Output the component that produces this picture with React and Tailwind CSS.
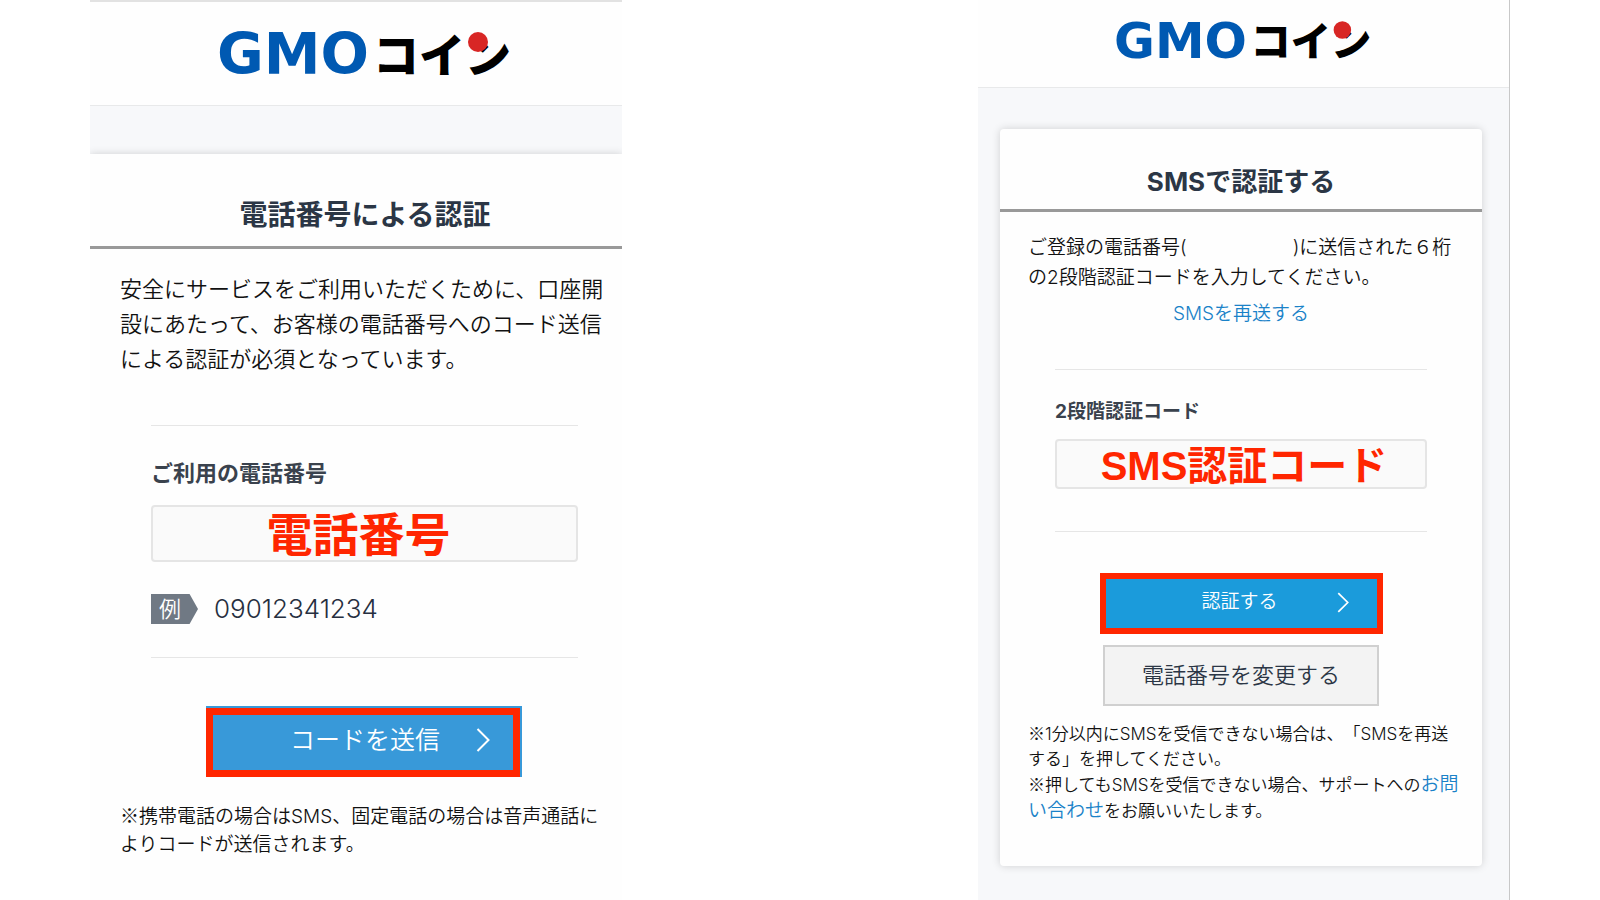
function Logo({ className }) {
  return (
    <svg viewBox="-2 0 296 72" className={className} role="img" aria-label="GMOコイン">
      <text x="-2" y="56" fontSize="57" fontWeight="700" fill="#0059b2" fontFamily="'DejaVu Sans', sans-serif">
        GMO
      </text>
      <text x="154" y="54" fontSize="46" fontWeight="900" fill="#000" fontFamily="'Noto Sans CJK JP', sans-serif">
        コイン
      </text>
      <circle cx="259" cy="24" r="10" fill="#d82625" />
    </svg>
  );
}

function Chevron({ className }) {
  return (
    <svg viewBox="0 0 14 24" className={className} fill="none" stroke="currentColor" strokeWidth="2" aria-hidden="true">
      <path d="M1.5 1 L12.5 12 L1.5 23" />
    </svg>
  );
}

// Inter has its own small ※, so take the full-width one
function NoteMark() {
  return <span className="font-['Noto_Sans_CJK_JP',sans-serif] leading-none">※</span>;
}

function PhonePanel() {
  return (
    <section className="w-full max-w-[532px] border-t-2 border-[#e2e2e2] bg-[#fefefe]">
      <header className="flex h-[104px] items-start justify-center border-b border-[#e8e9ea] pt-[16px] pl-[18px]">
        <Logo className="w-[296px]" />
      </header>
      <div className="h-[48px] bg-[#f7f8fa]" />
      <div className="bg-[#fefefe] shadow-[0_0_8px_rgba(0,0,0,0.16)] [clip-path:inset(-12px_0_0_0)]">
        <h1 className="border-b-3 border-[#999] pt-[41px] pb-[11px] pl-[18px] text-center text-[28px] leading-[40px] font-bold text-[#2b3645]">
          電話番号による認証
        </h1>
        <p className="pt-[23px] pl-[30px] text-[22px] leading-[35px] whitespace-nowrap">
          安全にサービスをご利用いただくために、口座開
          <br />
          設にあたって、お客様の電話番号へのコード送信
          <br />
          による認証が必須となっています。
        </p>
        <form className="mt-[48px] mr-[44px] ml-[61px] border-y border-[#e6e6e6] pt-[31px] pb-[33px]">
          <label htmlFor="phone" className="block text-[22px] leading-[32px] font-bold text-[#3a424d]">
            ご利用の電話番号
          </label>
          <input
            id="phone"
            type="text"
            defaultValue="電話番号"
            className="mt-[16px] block h-[57px] w-full rounded-sm border-2 border-[#e5e5e5] bg-[#fafafa] pr-[12px] pb-[6px] text-center text-[46px] leading-[50px] font-bold text-[#ff2600]"
          />
          <div className="mt-[32px] flex h-[30px] items-center gap-[16px]">
            <span className="h-[30px] w-[47px] bg-[#707984] pl-[8px] text-[22px] leading-[30px] text-white [clip-path:polygon(0_0,82%_0,100%_50%,82%_100%,0_100%)]">
              例
            </span>
            <span className="text-[26px] leading-[30px] text-[#262f40]">09012341234</span>
          </div>
        </form>
        <div className="mt-[48px] ml-[116px] w-[316px] bg-[#3899d9] pt-[2px] pr-[2px]">
          <button
            type="button"
            className="flex h-[69px] w-full items-center border-7 border-[#ff2600] bg-[#3899d9] pr-[23px] pb-[6px] pl-[77px] text-[25px] leading-[36px] text-white"
          >
            コードを送信
            <Chevron className="ml-auto h-[24px] w-[14px]" />
          </button>
        </div>
        <p className="pt-[26px] pl-[30px] text-[19px] leading-[28px] whitespace-nowrap">
          <NoteMark />
          携帯電話の場合はSMS、固定電話の場合は音声通話に
          <br />
          よりコードが送信されます。
        </p>
      </div>
    </section>
  );
}

function SmsPanel() {
  return (
    <section className="w-full max-w-[532px] border-r border-[#c8c8c8] bg-[#f7f8fa]">
      <header className="flex h-[88px] items-start justify-center border-b border-[#e8e9ea] bg-[#fefefe] pt-[9px]">
        <Logo className="w-[259px]" />
      </header>
      <div className="mt-[41px] mr-[27px] ml-[22px] rounded-sm bg-[#fefefe] pb-[42px] shadow-[0_0_8px_rgba(0,0,0,0.16)]">
        <h1 className="border-b-3 border-[#999] pt-[35px] pb-[9px] text-center text-[26px] leading-[36px] font-bold text-[#2b3645]">
          SMSで認証する
        </h1>
        <p className="pt-[21px] pl-[28px] text-[19px] leading-[30px] whitespace-nowrap">
          ご登録の電話番号(
          <span className="inline-block w-[106px]" />
          )に送信された６桁
          <br />
          の2段階認証コードを入力してください。
        </p>
        <p className="pt-[6px] text-center text-[19px] leading-[30px]">
          <a href="#resend" className="text-[#1a82c8]">SMSを再送する</a>
        </p>
        <form className="mx-[55px] mt-[40px] border-y border-[#e6e6e6] pt-[27px] pb-[42px]">
          <label htmlFor="code" className="block text-[19px] leading-[30px] font-bold text-[#3a424d]">
            2段階認証コード
          </label>
          <input
            id="code"
            type="text"
            defaultValue="SMS認証コード"
            className="mt-[12px] block h-[50px] w-full rounded-sm border-2 border-[#e5e5e5] bg-[#fafafa] pb-[2px] pl-[6px] text-center font-['Liberation_Sans','Noto_Sans_CJK_JP',sans-serif] text-[40px] leading-[44px] font-bold text-[#ff2600]"
          />
        </form>
        <div className="mt-[41px] flex flex-col items-center">
          <button
            type="button"
            className="flex h-[61px] w-[283px] items-center border-6 border-[#ff2600] bg-[#1b9bdb] pr-[28px] pb-[3px] pl-[96px] text-[19px] leading-[30px] text-white"
          >
            認証する
            <Chevron className="ml-auto h-[21px] w-[12px]" />
          </button>
          <button
            type="button"
            className="mt-[11px] h-[61px] w-[276px] border-2 border-[#d0d0d0] bg-[#f3f3f3] pb-[2px] text-[22px] leading-[36px] text-[#2b3645]"
          >
            電話番号を変更する
          </button>
        </div>
        <p className="pt-[16px] pl-[28px] text-[17px] leading-[25px] whitespace-nowrap [text-spacing-trim:space-all]">
          <NoteMark />
          1分以内にSMSを受信できない場合は、「SMSを再送
          <br />
          する」を押してください。
          <br />
          <NoteMark />
          押してもSMSを受信できない場合、サポートへの
          <a href="#contact" className="text-[19px] text-[#1a82c8]">
            お問
            <br />
            い合わせ
          </a>
          をお願いいたします。
        </p>
      </div>
    </section>
  );
}

export default function App() {
  return (
    <main
      lang="ja"
      className="flex min-h-screen justify-between bg-white px-[90px] font-['Inter','Noto_Sans_CJK_JP',sans-serif] [font-weight:350] text-[#111]"
    >
      <PhonePanel />
      <SmsPanel />
    </main>
  );
}
